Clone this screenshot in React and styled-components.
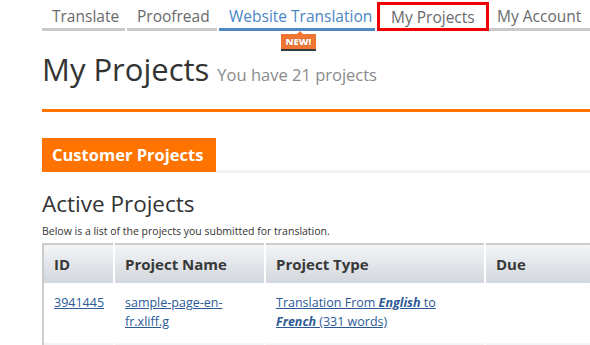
import React from "react";
import styled, { createGlobalStyle } from "styled-components";

const GlobalStyle = createGlobalStyle`
  html, body {
    margin: 0;
    padding: 0;
    background: #ffffff;
    font-family: "Open Sans", "Noto Sans", sans-serif;
    overflow: hidden;
  }
`;

const Page = styled.div`
  width: 590px;
  height: 345px;
  overflow: hidden;
  padding-left: 42px;
  box-sizing: border-box;
`;

const Nav = styled.div`
  display: flex;
  padding-top: 2px;
  width: 560px;
`;

const Tab = styled.div`
  position: relative;
  flex: ${(p) => (p.$grow ? "1" : "none")};
  width: ${(p) => (p.$w ? p.$w + "px" : "auto")};
  margin-right: ${(p) => (p.$gap ? p.$gap : 0)}px;
  height: 29px;
  box-sizing: border-box;
  padding-top: 2px;
  padding-left: ${(p) => (p.$pad ? p.$pad : 10)}px;
  font-size: 15.5px;
  line-height: 24px;
  color: ${(p) => (p.$active ? "#4a86c5" : "#6a6a6a")};
  border-bottom: 3px solid ${(p) => (p.$active ? "#4d88c4" : "#c9c9c9")};
  white-space: nowrap;
`;

const BoxedTab = styled.div`
  width: 112px;
  height: 29px;
  box-sizing: border-box;
  border: 3px solid #f00000;
  padding-left: 11px;
  padding-top: 1px;
  font-size: 15.5px;
  line-height: 22px;
  color: #6a6a6a;
  white-space: nowrap;
`;

const NewBadge = styled.span`
  position: absolute;
  left: 62px;
  top: 32px;
  width: 35px;
  height: 17px;
  box-sizing: border-box;
  background: #f07634;
  border-bottom: 2px solid #3a3a3a;
  color: #ffffff;
  font-size: 9.5px;
  font-weight: 800;
  line-height: 15px;
  text-align: center;
  text-shadow: 0 0 1px #a04010;

  &::before {
    content: "";
    position: absolute;
    left: 16px;
    top: -3px;
    border-left: 3px solid transparent;
    border-right: 3px solid transparent;
    border-bottom: 3px solid #f07634;
  }
`;

const TitleRow = styled.div`
  display: flex;
  align-items: baseline;
  gap: 8px;
  margin-top: 18px;
  height: 46px;
`;

const Title = styled.h1`
  margin: 0;
  font-weight: 400;
  font-size: 31px;
  color: #333333;
  line-height: 40px;
`;

const SubTitle = styled.span`
  font-size: 16.5px;
  color: #8a8a8a;
`;

const OrangeRule = styled.div`
  height: 3px;
  background: #ff7400;
  margin-top: 14px;
`;

const SectionBar = styled.div`
  display: flex;
  align-items: flex-end;
  margin-top: 26px;
`;

const SectionTab = styled.div`
  height: 34px;
  padding: 0 10px;
  background: #ff7400;
  color: #ffffff;
  font-weight: 700;
  font-size: 16.5px;
  line-height: 33px;
  white-space: nowrap;
  width: 174px;
  box-sizing: border-box;
`;

const SectionLine = styled.div`
  flex: 1;
  height: 3px;
  margin-bottom: -1px;
  background: #f1f1f1;
`;

const Heading = styled.h2`
  margin: 17px 0 0;
  font-weight: 400;
  font-size: 22.5px;
  line-height: 30px;
  color: #333333;
`;

const Note = styled.p`
  margin: 5px 0 0;
  font-size: 10.5px;
  line-height: 14px;
  color: #333333;
`;

const Table = styled.table`
  margin-top: 5px;
  border-collapse: collapse;
  table-layout: fixed;
  width: 600px;
  border-top: 2px solid #cccccc;
  border-left: 2px solid #cccccc;
`;

const HeadCell = styled.th`
  width: ${(p) => p.$w}px;
  height: 39px;
  padding: 0 0 0 10px;
  text-align: left;
  font-size: 15px;
  font-weight: 700;
  color: #383838;
  background: linear-gradient(#f3f5f7, #d2d7dd);
  border-right: 2px solid #ffffff;
  box-sizing: border-box;
`;

const Row = styled.tr`
  background: ${(p) => (p.$alt ? "#f3f4f6" : "#ffffff")};
`;

const Cell = styled.td`
  vertical-align: top;
  padding: 10px 10px 12px 10px;
  height: 58px;
  box-sizing: border-box;
  font-size: 12.5px;
  line-height: 19px;
  color: #2c5a96;
  border-right: 2px solid #ffffff;
`;

const Link = styled.a`
  color: #2c5a96;
  text-decoration: underline;
`;

const Strong = styled.b`
  font-style: italic;
  font-weight: 700;
`;

export default function App() {
  return (
    <>
      <GlobalStyle />
      <Page>
        <Nav>
          <Tab $w={83} $gap={2}>Translate</Tab>
          <Tab $w={90} $gap={2}>Proofread</Tab>
          <Tab $w={156} $gap={2} $active>
            Website Translation
            <NewBadge>NEW!</NewBadge>
          </Tab>
          <BoxedTab>My Projects</BoxedTab>
          <Tab $grow $pad={8}>My Account</Tab>
        </Nav>

        <TitleRow>
          <Title>My Projects</Title>
          <SubTitle>You have 21 projects</SubTitle>
        </TitleRow>
        <OrangeRule />

        <SectionBar>
          <SectionTab>Customer Projects</SectionTab>
          <SectionLine />
        </SectionBar>

        <Heading>Active Projects</Heading>
        <Note>Below is a list of the projects you submitted for translation.</Note>

        <Table>
          <thead>
            <tr>
              <HeadCell $w={71}>ID</HeadCell>
              <HeadCell $w={151}>Project Name</HeadCell>
              <HeadCell $w={220}>Project Type</HeadCell>
              <HeadCell $w={158}>Due</HeadCell>
            </tr>
          </thead>
          <tbody>
            <Row>
              <Cell>
                <Link>3941445</Link>
              </Cell>
              <Cell>
                <Link>sample-page-en-fr.xliff.g</Link>
              </Cell>
              <Cell>
                <Link>
                  Translation From <Strong>English</Strong> to <Strong>French</Strong> (331 words)
                </Link>
              </Cell>
              <Cell />
            </Row>
            <Row $alt>
              <Cell />
              <Cell />
              <Cell />
              <Cell />
            </Row>
          </tbody>
        </Table>
      </Page>
    </>
  );
}
